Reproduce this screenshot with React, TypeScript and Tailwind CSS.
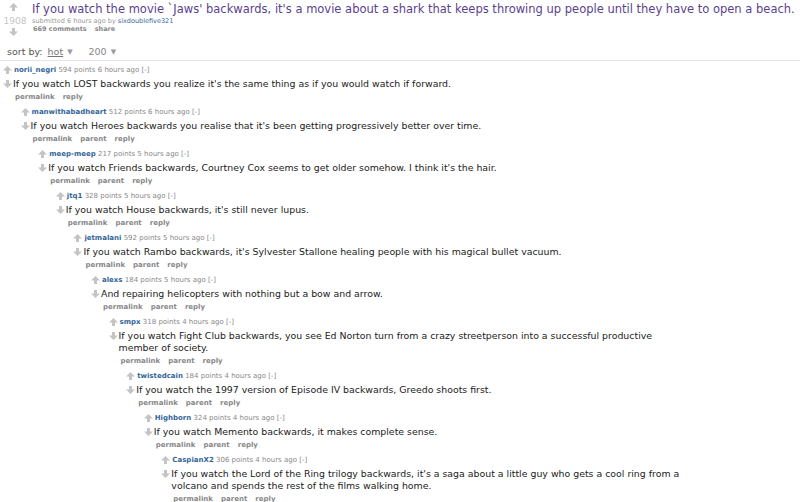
import React from "react";

type CommentData = {
  author: string;
  points: number;
  age: string;
  body: string[];
};

const comments: CommentData[] = [
  { author: "norii_negri", points: 594, age: "6 hours ago", body: ["If you watch LOST backwards you realize it's the same thing as if you would watch if forward."] },
  { author: "manwithabadheart", points: 512, age: "6 hours ago", body: ["If you watch Heroes backwards you realise that it's been getting progressively better over time."] },
  { author: "meep-meep", points: 217, age: "5 hours ago", body: ["If you watch Friends backwards, Courtney Cox seems to get older somehow. I think it's the hair."] },
  { author: "jtq1", points: 328, age: "5 hours ago", body: ["If you watch House backwards, it's still never lupus."] },
  { author: "jetmalani", points: 592, age: "5 hours ago", body: ["If you watch Rambo backwards, it's Sylvester Stallone healing people with his magical bullet vacuum."] },
  { author: "alexs", points: 184, age: "5 hours ago", body: ["And repairing helicopters with nothing but a bow and arrow."] },
  {
    author: "smpx",
    points: 318,
    age: "4 hours ago",
    body: [
      "If you watch Fight Club backwards, you see Ed Norton turn from a crazy streetperson into a successful productive",
      "member of society.",
    ],
  },
  { author: "twistedcain", points: 184, age: "4 hours ago", body: ["If you watch the 1997 version of Episode IV backwards, Greedo shoots first."] },
  { author: "Highborn", points: 324, age: "4 hours ago", body: ["If you watch Memento backwards, it makes complete sense."] },
  {
    author: "CaspianX2",
    points: 306,
    age: "4 hours ago",
    body: [
      "If you watch the Lord of the Ring trilogy backwards, it's a saga about a little guy who gets a cool ring from a",
      "volcano and spends the rest of the films walking home.",
    ],
  },
];

const Arrow = ({ down = false, className = "" }: { down?: boolean; className?: string }) => (
  <svg width="9" height="8" viewBox="0 0 9 8" className={className}>
    <path
      d={down ? "M4.5 8 L9 3.5 L6 3.5 L6 0 L3 0 L3 3.5 L0 3.5 Z" : "M4.5 0 L9 4.5 L6 4.5 L6 8 L3 8 L3 4.5 L0 4.5 Z"}
      fill="#c4c4c4"
    />
  </svg>
);

const Comment = ({ index }: { index: number }) => {
  const c = comments[index];
  if (!c) return null;
  return (
    <div className="flex">
      <div className="w-[10px] shrink-0 flex flex-col items-start">
        <Arrow className="mt-[2px]" />
        <Arrow down className="mt-[6px]" />
      </div>
      <div className="flex-1 min-w-0">
        <p className="h-[12px] leading-[12px] text-[7px] text-[#888] pl-[1px]">
          <span className="font-bold text-[#336699]">{c.author}</span> {c.points} points {c.age} [-]
        </p>
        <p className="mt-[2px] text-[9.4px] leading-[12px] text-[#222] whitespace-nowrap">
          {c.body.map((line, i) => (
            <React.Fragment key={i}>
              {i > 0 && <br />}
              {line}
            </React.Fragment>
          ))}
        </p>
        <div className="mt-[1px] mb-[3px] h-[12px] leading-[12px] text-[7px] font-bold text-[#888] pl-[2px] flex gap-[8px]">
          <span>permalink</span>
          {index > 0 && <span>parent</span>}
          <span>reply</span>
        </div>
        {index + 1 < comments.length && (
          <div className="ml-[7.6px]">
            <Comment index={index + 1} />
          </div>
        )}
      </div>
    </div>
  );
};

export default function App() {
  return (
    <div className="w-[800px] h-[502px] overflow-hidden bg-white font-['DejaVu_Sans',Verdana,sans-serif]">
      <div className="flex pt-[2px]">
        <div className="w-[30px] shrink-0 flex flex-col items-center">
          <Arrow className="mt-[1px] -ml-[3px]" />
          <span className="text-[9px] leading-[12px] text-[#c6c6c6] mt-[4px]">1908</span>
          <Arrow down className="mt-[1px] -ml-[3px]" />
        </div>
        <div className="pl-[2px]">
          <p className="text-[11.5px] leading-[15px] text-[#5b3f8f] whitespace-nowrap">
            If you watch the movie `Jaws' backwards, it's a movie about a shark that keeps throwing up people until they have to open a beach.
          </p>
          <p className="text-[6.5px] leading-[8px] text-[#999]">
            submitted 6 hours ago by <span className="text-[#336699]">sixdoublefive321</span>
          </p>
          <div className="text-[6.5px] leading-[9px] font-bold text-[#888] flex gap-[8px] pl-[1px]">
            <span>669 comments</span>
            <span>share</span>
          </div>
        </div>
      </div>
      <div className="flex items-center h-[16px] mt-[9px] pl-[7px] text-[9.5px] text-[#555] border-b border-[#e4e4e4]">
        <span>sort by:</span>
        <span className="ml-[5px] underline text-[#777]">hot</span>
        <span className="ml-[4px] text-[#999] text-[7px]">▼</span>
        <span className="ml-[16px] text-[#888]">200</span>
        <span className="ml-[4px] text-[#999] text-[7px]">▼</span>
      </div>
      <div className="pl-[3px] pt-[3px]">
        <Comment index={0} />
      </div>
    </div>
  );
}
